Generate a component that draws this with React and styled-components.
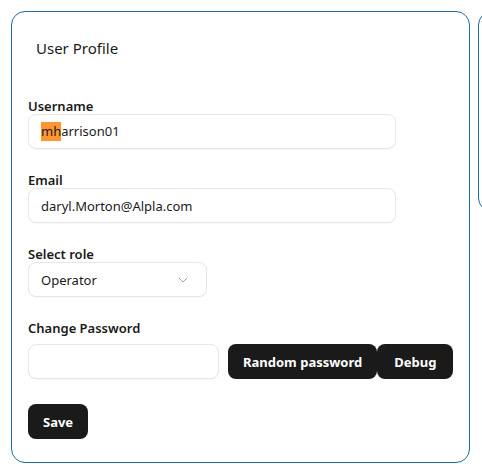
import styled, { createGlobalStyle } from "styled-components"
import { ChevronDown } from "lucide-react"

const GlobalStyle = createGlobalStyle`
    html, body {
        margin: 0;
        padding: 0;
        background: #ffffff;
        overflow: hidden;
    }
    body {
        font-family: "Noto Sans", "Open Sans", sans-serif;
        color: #111111;
    }
`

export default function App() {
    return (
        <>
            <GlobalStyle />
            <Page>
                <Card>
                    <Header>
                        <Title>User Profile</Title>
                    </Header>
                    <Form onSubmit={(e) => e.preventDefault()}>
                        <Group>
                            <Label>Username</Label>
                            <Field as="div">
                                <Mark>mh</Mark>arrison01
                            </Field>
                        </Group>
                        <Group>
                            <Label>Email</Label>
                            <Field type="email" defaultValue="daryl.Morton@Alpla.com" />
                        </Group>
                        <Group>
                            <Label>Select role</Label>
                            <Select type="button">
                                <span>Operator</span>
                                <ChevronDown size={16} strokeWidth={1.5} color="#a3a3a3" />
                            </Select>
                        </Group>
                        <Group $gap={25}>
                            <Label $mb={8}>Change Password</Label>
                            <Row>
                                <Field type="password" $width={191} />
                                <Button type="button" $ml={9} $px={15}>Random password</Button>
                                <Button type="button" $px={17}>Debug</Button>
                            </Row>
                        </Group>
                        <div>
                            <Button type="submit" $px={15}>Save</Button>
                        </div>
                    </Form>
                </Card>
                <SideCard />
            </Page>
        </>
    )
}

const Page = styled.div`
    display: flex;
    align-items: flex-start;
    gap: 8px;
    padding: 11px;
    width: 482px;
    box-sizing: border-box;
    overflow: hidden;
`

const Card = styled.div`
    flex: 0 0 458px;
    box-sizing: border-box;
    border: 1px solid #1f6aa5;
    border-radius: 14px;
    padding: 16px 16px 23px;
`

const SideCard = styled.div`
    flex: 0 0 300px;
    height: 201px;
    box-sizing: border-box;
    border: 1px solid #1f6aa5;
    border-radius: 14px;
`

const Header = styled.div`
    padding: 8px;
`

const Title = styled.h2`
    margin: 0;
    font-size: 15px;
    font-weight: 400;
    line-height: 24px;
    color: #1a1a1a;
`

const Form = styled.form`
    display: flex;
    flex-direction: column;
    margin-top: 30px;
`

const Group = styled.div`
    display: flex;
    flex-direction: column;
    margin-bottom: ${(p) => p.$gap ?? 23}px;
`

const Label = styled.label`
    font-size: 13px;
    font-weight: 600;
    line-height: 16px;
    margin-bottom: ${(p) => p.$mb ?? 0}px;
    color: #1a1a1a;
`

const Field = styled.input`
    box-sizing: border-box;
    flex-shrink: 0;
    width: ${(p) => p.$width ?? 368}px;
    height: 35px;
    border: 1px solid #e6e6e6;
    border-radius: 8px;
    padding: 0 12px;
    font-family: inherit;
    font-size: 13px;
    line-height: 19px;
    color: #1a1a1a;
    background: #ffffff;
    outline: none;
    display: flex;
    align-items: center;
    box-shadow: 0 1px 1px rgba(0, 0, 0, 0.03);
`

const Mark = styled.mark`
    background: #ff9632;
    color: #1a1a1a;
    line-height: 19px;
    display: inline-block;
`

const Select = styled.button`
    box-sizing: border-box;
    width: 179px;
    height: 35px;
    display: flex;
    align-items: center;
    justify-content: space-between;
    padding: 0 15px 0 12px;
    border: 1px solid #e6e6e6;
    border-radius: 8px;
    background: #ffffff;
    font-family: inherit;
    font-size: 13px;
    color: #1a1a1a;
    cursor: pointer;
    box-shadow: 0 1px 1px rgba(0, 0, 0, 0.03);
`

const Row = styled.div`
    display: flex;
    align-items: center;
`

const Button = styled.button`
    flex-shrink: 0;
    height: 35px;
    padding: 0 ${(p) => p.$px ?? 16}px;
    margin-left: ${(p) => p.$ml ?? 0}px;
    border: none;
    border-radius: 8px;
    background: #1a1a1a;
    color: #ffffff;
    font-family: inherit;
    font-size: 13px;
    font-weight: 700;
    white-space: nowrap;
    cursor: pointer;
`
